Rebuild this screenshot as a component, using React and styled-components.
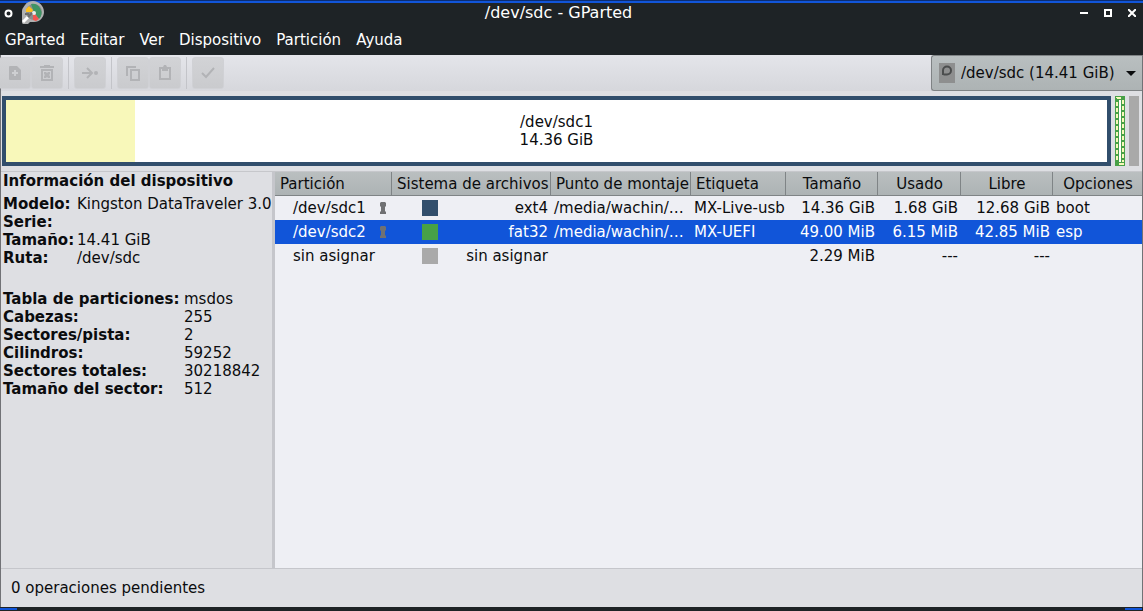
import React from "react";
import styled, { createGlobalStyle } from "styled-components";

const GlobalStyle = createGlobalStyle`
  *, *::before, *::after { box-sizing: border-box; }
  body { margin: 0; background: #1e2326; }
  body, button, select, table {
    font-family: "DejaVu Sans", sans-serif;
    font-size: 15px;
    line-height: 18px;
    color: #0b0c0e;
  }
`;

const Window = styled.div`
  display: flex;
  flex-direction: column;
  min-height: 100vh;
  background: #1e2326;
  border-top: 1px solid #0c2c70;
`;

const TitleBar = styled.header`
  display: flex;
  align-items: flex-start;
  height: 23px;
  border-top: 2px solid #1155d9;
  color: #fff;
`;

const TitleLeft = styled.div`
  display: flex;
  align-items: flex-start;
  gap: 9px;
  padding-left: 4px;
  margin-top: -2px;
`;

const Title = styled.h1`
  flex: 1;
  margin: 0;
  font-size: 16px;
  line-height: 20px;
  font-weight: normal;
  text-align: center;
`;

const WindowControls = styled.div`
  display: flex;
  gap: 8px;
  padding: 0 3px;
`;

const ControlButton = styled.button`
  display: flex;
  align-items: center;
  justify-content: center;
  width: 16px;
  height: 20px;
  padding: 0;
  border: 0;
  background: none;
  color: #fff;
`;

const MenuButton = styled(ControlButton)`
  width: 9px;
  height: 24px;
`;

const MenuBar = styled.nav`
  display: flex;
  gap: 15px;
  height: 31px;
  padding: 0 5px;
  align-items: center;
`;

const MenuItem = styled.button`
  padding: 0;
  border: 0;
  background: none;
  color: #fff;
`;

const Content = styled.main`
  flex: 1;
  display: flex;
  flex-direction: column;
  background: #dedfe3;
  border: solid #717276;
  border-width: 0 1px;
`;

const Toolbar = styled.div`
  display: flex;
  align-items: center;
  justify-content: space-between;
  height: 36px;
  background: linear-gradient(#e4e5ea, #d6d7dc);
`;

const ToolGroup = styled.div`
  display: flex;
  margin-left: -2px;
`;

const ToolButton = styled.button`
  display: flex;
  align-items: center;
  justify-content: center;
  width: 32px;
  height: 32px;
  padding: 0;
  border: 1px solid #d0d1d5;
  border-radius: 3px;
  background: linear-gradient(#d2d3d6, #cacbce);
  color: #b2b3b6;
`;

const Separator = styled.span`
  width: 1px;
  height: 32px;
  margin: 0 5px;
  background: #c3c4c9;
`;

const DevicePicker = styled.label`
  display: grid;
  align-items: center;
  height: 36px;
  border: 1px solid #7f8385;
  border-right: 0;
  border-radius: 3px 0 0 3px;
  background: linear-gradient(#b9bfc0, #adb3b4);

  > * { grid-area: 1 / 1; }
  > svg { pointer-events: none; }
  > svg:first-of-type { margin-left: 7px; }
  > svg:last-of-type { justify-self: end; margin-right: 6px; }
`;

const DeviceSelect = styled.select`
  appearance: none;
  width: 210px;
  height: 34px;
  padding: 0 0 0 29px;
  border: 0;
  background: none;
`;

const DiskMap = styled.section`
  display: flex;
  gap: 4px;
  height: 81px;
  padding: 5px 3px 5px 1px;
  border-bottom: 1px solid #c6c7cb;
`;

const MainPartition = styled.div`
  flex: 1;
  display: grid;
  border: 4px solid #314e6c;
  background: #fff;

  > * { grid-area: 1 / 1; }
`;

const UsedSpace = styled.div`
  background: #f8f8ba;
`;

const PartitionLabel = styled.div`
  align-self: center;
  text-align: center;
`;

const SmallPartition = styled.div`
  width: 10px;
  height: 70px;
  background: ${(p) => p.$color};
`;

const Workspace = styled.div`
  flex: 1;
  display: flex;
`;

const Sidebar = styled.aside`
  flex: 0 0 274px;
  padding-left: 2px;
  border-right: 3px solid #c5c6cb;
`;

const SidebarTitle = styled.h2`
  margin: 0 0 5px;
  font-size: 15px;
  line-height: 18px;
`;

const InfoList = styled.dl`
  display: grid;
  grid-template-columns: ${(p) => p.$label} 1fr;
  margin: 0 0 23px;
  white-space: nowrap;

  dt { font-weight: bold; }
  dd { margin: 0; }
`;

const TablePane = styled.section`
  flex: 1;
  min-width: 0;
  background: #eeeff4;
`;

const PartitionTable = styled.table`
  width: 100%;
  table-layout: fixed;
  border-collapse: separate;
  border-spacing: 0;
`;

const HeadCell = styled.th`
  height: 24px;
  padding: 0 ${(p) => (p.$align ? 4 : 0)}px 0 5px;
  font-weight: normal;
  text-align: ${(p) => p.$align || "left"};
  white-space: nowrap;
  background: linear-gradient(#babfc0, #adb3b4);
  border-right: 1px solid #7f8486;
  border-bottom: 1px solid #7f8486;

  &:last-child { border-right: 0; }
`;

const Row = styled.tr`
  background: ${(p) => (p.$selected ? "#1155d9" : "transparent")};
  color: ${(p) => (p.$selected ? "#fff" : "#0b0c0e")};
`;

const Cell = styled.td`
  height: 24px;
  padding: 0 3px;
  text-align: ${(p) => p.$align || "left"};
  white-space: nowrap;
`;

const NameLine = styled.div`
  display: flex;
  align-items: center;
  justify-content: space-between;
  padding: 0 3px 0 15px;
`;

const FileSystemLine = styled(NameLine)`
  padding: 0 0 0 27px;
`;

const Swatch = styled.span`
  width: 16px;
  height: 16px;
  background: ${(p) => p.$color};
`;

const StatusBar = styled.footer`
  height: 39px;
  padding: 10px;
  border-top: 1px solid #c5c6cb;
`;

const BottomEdge = styled.div`
  display: flex;
  justify-content: space-between;
  height: 4px;
  padding: 1px 1px 1px 0;

  &::before, &::after {
    content: "";
    width: 17px;
    background: #1155d9;
  }
`;

const Icon = ({ size = 16, children }) => (
  <svg width={size} height={size} viewBox={`0 0 ${size} ${size}`} fill="none" stroke="currentColor" aria-hidden="true">
    {children}
  </svg>
);

const AppIcon = () => (
  <svg width="22" height="23" viewBox="0 0 22 23" aria-hidden="true">
    <path d="M0 22V10C0 7 2 6 3 4c2-3 5-4 8-4 6 0 11 5 11 11 0 5-4 10-10 10H8l-2 2H1z" fill="#b0b1b1" />
    <circle cx="12" cy="11" r="8" fill="#8b8d8c" />
    <path d="M12 11 9 3a9 9 0 0 1 8 15z" fill="#3f9463" />
    <path d="M10 11H4V8l3-3 4 4z" fill="#fdc01b" />
    <path d="M11 13l1-1 5 6-3 2-3-1z" fill="#f2564f" />
    <circle cx="12" cy="12" r="2" fill="#eceeed" />
    <path d="M1 21l5-5" stroke="#fff" strokeWidth="3" />
    <path d="M6 16l4-4M3 13h4" stroke="#6b6d6c" strokeWidth="2" />
  </svg>
);

const DriveIcon = () => (
  <svg width="16" height="20" viewBox="0 0 16 20" aria-hidden="true">
    <rect width="16" height="20" fill="#8e8f8f" />
    <path d="M4 12V7.500a4 4 0 1 1 4 4H4.500" fill="none" stroke="#4b4d4d" strokeWidth="2" />
  </svg>
);

const LockIcon = () => (
  <svg width="6" height="12" viewBox="0 0 6 12" fill="#707173" aria-hidden="true">
    <path d="M1 0h4l1 1v3L5 5v4l1 1v2H0v-2l1-1V5L0 4V1z" />
  </svg>
);

const SelectedPartition = () => (
  <svg width="10" height="70" viewBox="0 0 10 70" aria-label="/dev/sdc2">
    <rect width="10" height="70" fill="#47a047" />
    <rect x="4" y="4" width="2" height="62" fill="#fff" />
    <path d="M2 6v60M8 4v62" stroke="#f8f8ba" strokeWidth="2" strokeDasharray="4 2" />
    <path d="M1 1h5v2H2V2H1zM4 67h5v2H4z" fill="#f8f8ba" />
  </svg>
);

const tools = [
  [
    ["Nueva", <path key="i" fill="currentColor" fillRule="evenodd" stroke="none" d="M3 1h7l4 4v10H3a1 1 0 0 1-1-1V2a1 1 0 0 1 1-1zm4 4v2H5v2h2v2h2V9h2V7H9V5z" />],
    ["Eliminar", <path key="i" fill="currentColor" fillRule="evenodd" stroke="none" d="M5 0h6v1h4v2H1V1h4zM2 4h12v12H2zm2 2v8h8V6zm1 1h2l1 1 1-1h2v2l-1 1 1 1v2H9l-1-1-1 1H5v-2l1-1-1-1z" />],
  ],
  [["Redimensionar/Mover", <g key="i"><path d="M0 8h9M5 3l5 5-5 5" strokeWidth="2" /><circle cx="14" cy="8" r="2" fill="currentColor" stroke="none" /></g>]],
  [
    ["Copiar", <path key="i" d="M2 11V2h9M6 5h8v10H6z" strokeWidth="2" />],
    ["Pegar", <g key="i"><path d="M3 3h10v11H3z" strokeWidth="2" /><path d="M5 2h1l1-2h2l1 2h1v4H5z" fill="currentColor" stroke="none" /></g>],
  ],
  [["Aplicar", <path key="i" d="M2 8l4 4 8-9" strokeWidth="2" />]],
];

const deviceInfo = [
  ["Modelo:", "Kingston DataTraveler 3.0"],
  ["Serie:", ""],
  ["Tamaño:", "14.41 GiB"],
  ["Ruta:", "/dev/sdc"],
];

const diskInfo = [
  ["Tabla de particiones:", "msdos"],
  ["Cabezas:", "255"],
  ["Sectores/pista:", "2"],
  ["Cilindros:", "59252"],
  ["Sectores totales:", "30218842"],
  ["Tamaño del sector:", "512"],
];

const columns = [
  ["Partición", 117],
  ["Sistema de archivos", 159],
  ["Punto de montaje", 140],
  ["Etiqueta", 95],
  ["Tamaño", 92, "center"],
  ["Usado", 83, "center"],
  ["Libre", 92, "center"],
  ["Opciones", undefined, "center"],
];

const partitions = [
  { name: "/dev/sdc1", locked: true, color: "#314e6c", fs: "ext4", mount: "/media/wachin/…", label: "MX-Live-usb", size: "14.36 GiB", used: "1.68 GiB", free: "12.68 GiB", flags: "boot" },
  { name: "/dev/sdc2", locked: true, selected: true, color: "#47a047", fs: "fat32", mount: "/media/wachin/…", label: "MX-UEFI", size: "49.00 MiB", used: "6.15 MiB", free: "42.85 MiB", flags: "esp" },
  { name: "sin asignar", color: "#a9a9a9", fs: "sin asignar", mount: "", label: "", size: "2.29 MiB", used: "---", free: "---", flags: "" },
];

const Info = ({ items, label }) => (
  <InfoList $label={label}>
    {items.map(([term, value]) => (
      <React.Fragment key={term}>
        <dt>{term}</dt>
        <dd>{value}</dd>
      </React.Fragment>
    ))}
  </InfoList>
);

export default function App() {
  return (
    <>
      <GlobalStyle />
      <Window>
        <TitleBar>
          <TitleLeft>
            <MenuButton aria-label="Menú de la ventana">
              <Icon size={9}><circle cx="4.500" cy="4.500" r="3" strokeWidth="2" /></Icon>
            </MenuButton>
            <AppIcon />
          </TitleLeft>
          <Title>/dev/sdc - GParted</Title>
          <WindowControls>
            <ControlButton aria-label="Minimizar">
              <Icon size={8}><path d="M0 4h8" strokeWidth="2" /></Icon>
            </ControlButton>
            <ControlButton aria-label="Maximizar">
              <Icon size={8}><path d="M1 1h6v6H1z" strokeWidth="2" /></Icon>
            </ControlButton>
            <ControlButton aria-label="Cerrar">
              <Icon size={8}><path d="M0 0l8 8M8 0L0 8" strokeWidth="2" /></Icon>
            </ControlButton>
          </WindowControls>
        </TitleBar>

        <MenuBar>
          {["GParted", "Editar", "Ver", "Dispositivo", "Partición", "Ayuda"].map((m) => (
            <MenuItem key={m}>{m}</MenuItem>
          ))}
        </MenuBar>

        <Content>
          <Toolbar>
            <ToolGroup>
              {tools.map((group, i) => (
                <React.Fragment key={i}>
                  {i > 0 && <Separator />}
                  {group.map(([name, shape]) => (
                    <ToolButton key={name} aria-label={name} disabled>
                      <Icon>{shape}</Icon>
                    </ToolButton>
                  ))}
                </React.Fragment>
              ))}
            </ToolGroup>
            <DevicePicker>
              <DriveIcon />
              <DeviceSelect aria-label="Dispositivo" defaultValue="sdc">
                <option value="sdc">/dev/sdc (14.41 GiB)</option>
              </DeviceSelect>
              <svg width="10" height="5" viewBox="0 0 10 5" aria-hidden="true">
                <path d="M0 0h10L5 5z" fill="#0b0c0e" />
              </svg>
            </DevicePicker>
          </Toolbar>

          <DiskMap>
            <MainPartition>
              <UsedSpace style={{ width: `${(1.68 / 14.36) * 100}%` }} />
              <PartitionLabel>
                /dev/sdc1
                <br />
                14.36 GiB
              </PartitionLabel>
            </MainPartition>
            <SelectedPartition />
            <SmallPartition $color="#a9a9a9" />
          </DiskMap>

          <Workspace>
            <Sidebar>
              <SidebarTitle>Información del dispositivo</SidebarTitle>
              <Info items={deviceInfo} label="74px" />
              <Info items={diskInfo} label="181px" />
            </Sidebar>
            <TablePane>
              <PartitionTable>
                <colgroup>
                  {columns.map(([name, width]) => (
                    <col key={name} width={width} />
                  ))}
                </colgroup>
                <thead>
                  <tr>
                    {columns.map(([name, , align]) => (
                      <HeadCell key={name} $align={align}>{name}</HeadCell>
                    ))}
                  </tr>
                </thead>
                <tbody>
                  {partitions.map((p) => (
                    <Row key={p.name} $selected={p.selected}>
                      <Cell>
                        <NameLine>
                          {p.name}
                          {p.locked && <LockIcon />}
                        </NameLine>
                      </Cell>
                      <Cell>
                        <FileSystemLine>
                          <Swatch $color={p.color} />
                          {p.fs}
                        </FileSystemLine>
                      </Cell>
                      <Cell>{p.mount}</Cell>
                      <Cell>{p.label}</Cell>
                      <Cell $align="right">{p.size}</Cell>
                      <Cell $align="right">{p.used}</Cell>
                      <Cell $align="right">{p.free}</Cell>
                      <Cell>{p.flags}</Cell>
                    </Row>
                  ))}
                </tbody>
              </PartitionTable>
            </TablePane>
          </Workspace>

          <StatusBar>0 operaciones pendientes</StatusBar>
        </Content>
        <BottomEdge />
      </Window>
    </>
  );
}
